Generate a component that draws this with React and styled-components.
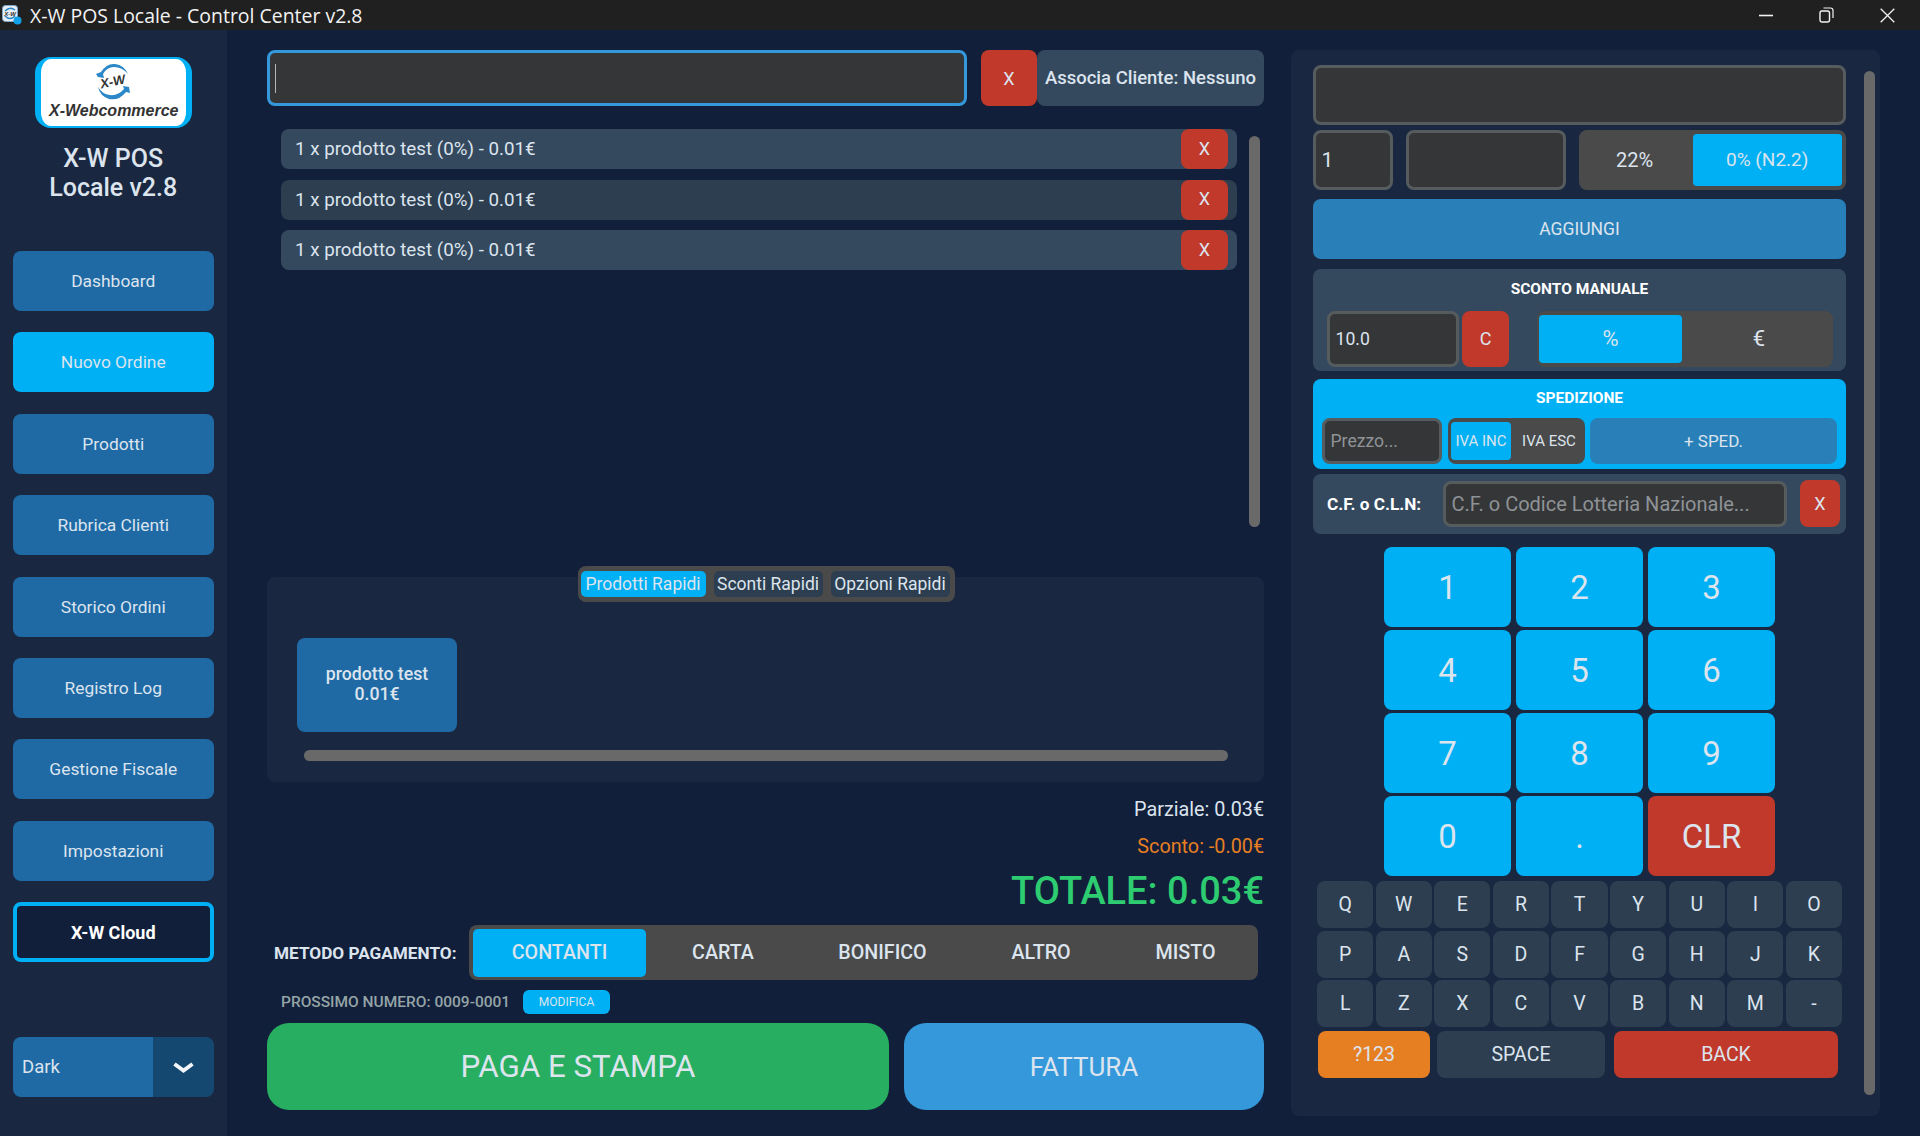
import React from 'react';
import styled, { createGlobalStyle } from 'styled-components';

const TEXT = '#dce4ee';
const CYAN = '#00b0f4';
const RED = '#c0392b';
const SLATE = '#34495e';
const SLATE_DARK = '#2c3e50';
const PANEL = '#1a2740';
const BLUE = '#1f6aa5';
const FIELD = '#343638';
const FIELD_BORDER = '#565b5e';
const SEGMENT = '#4a4a4a';

const GlobalStyle = createGlobalStyle`
  html, body {
    margin: 0;
    padding: 0;
    width: 1920px;
    height: 1136px;
    overflow: hidden;
    background: #111f3b;
    font-family: Roboto, "Liberation Sans", sans-serif;
    color: ${TEXT};
  }
  * {
    box-sizing: border-box;
  }
`;

const Window = styled.div`
  width: 1920px;
  height: 1136px;
  display: flex;
  flex-direction: column;
`;

const TitleBar = styled.header`
  height: 30px;
  flex: none;
  background: #202020;
  display: flex;
  align-items: center;
  padding-left: 2px;
  color: #f2f2f2;
  font-family: "Open Sans", "Noto Sans", sans-serif;
  font-size: 19.45px;
`;

const TitleText = styled.span`
  margin-left: 8px;
  flex: 1;
`;

const WindowButtons = styled.div`
  display: flex;
  align-items: center;
  height: 100%;
  margin-right: 2px;
`;

const WindowButton = styled.div`
  width: 61px;
  height: 100%;
  display: flex;
  align-items: center;
  justify-content: center;
`;

const Body = styled.div`
  flex: 1;
  display: flex;
  min-height: 0;
`;

const Sidebar = styled.aside`
  width: 227px;
  flex: none;
  background: ${PANEL};
  display: flex;
  flex-direction: column;
  padding: 27px 13.5px 0 13px;
`;

const Logo = styled.div`
  width: 157px;
  height: 71px;
  align-self: center;
  background: #fff;
  border-style: solid;
  border-color: ${CYAN};
  border-width: 2px 6px 2px 6px;
  border-radius: 16px;
  display: flex;
  flex-direction: column;
  align-items: center;
  padding-top: 4px;
`;

const LogoText = styled.span`
  font-family: "Liberation Sans", sans-serif;
  font-weight: 700;
  font-style: italic;
  font-size: 16px;
  line-height: 18px;
  color: #333;
  white-space: nowrap;
  margin: 1px 0 0 1px;
`;

const BrandTitle = styled.h1`
  margin: 16px 0 0;
  font-size: 25px;
  line-height: 29px;
  font-weight: 500;
  text-align: center;
`;

const Nav = styled.nav`
  display: flex;
  flex-direction: column;
  gap: 21.4px;
  margin-top: 49px;
`;

const NavButton = styled.div`
  height: 60px;
  border-radius: 8px;
  display: flex;
  align-items: center;
  justify-content: center;
  font-size: 17.4px;
  background: ${(p) => (p.$active ? CYAN : BLUE)};
  ${(p) =>
    p.$cloud &&
    `
    background: #111f3b;
    border: 4px solid ${CYAN};
    color: #fff;
    font-weight: 700;
    font-size: 18px;
  `}
`;

const ThemeSelect = styled.div`
  height: 60px;
  margin-top: 74.5px;
  border-radius: 8px;
  overflow: hidden;
  display: flex;
  font-size: 18.5px;
`;

const ThemeValue = styled.div`
  width: 140px;
  background: ${BLUE};
  display: flex;
  align-items: center;
  padding-left: 9px;
`;

const ThemeArrow = styled.div`
  flex: 1;
  background: #144870;
  display: flex;
  align-items: center;
  justify-content: center;
`;

const Main = styled.main`
  width: 997px;
  flex: none;
  margin-left: 40px;
  padding-top: 20px;
  display: flex;
  flex-direction: column;
`;

const SearchRow = styled.div`
  display: flex;
  height: 56px;
`;

const SearchBox = styled.div`
  width: 700px;
  margin-right: 14px;
  background: ${FIELD};
  border: 3px solid #3498db;
  border-radius: 8px;
  display: flex;
  align-items: center;
  padding-left: 5px;
`;

const Caret = styled.span`
  width: 1px;
  height: 29px;
  background: #b5b5b5;
`;

const RedButton = styled.div`
  background: ${RED};
  border-radius: 8px;
  display: flex;
  align-items: center;
  justify-content: center;
  flex: none;
  width: ${(p) => p.$w}px;
  font-size: ${(p) => p.$size || 18}px;
`;

const ClientButton = styled.div`
  flex: 1;
  background: ${SLATE};
  border-radius: 8px;
  display: flex;
  align-items: center;
  justify-content: center;
  font-size: 18.5px;
  font-weight: 500;
  white-space: nowrap;
`;

const CartArea = styled.section`
  display: flex;
  height: 448px;
  margin-top: 23px;
  padding-left: 14px;
`;

const CartList = styled.ul`
  width: 956px;
  margin: 0;
  padding: 0;
  list-style: none;
  display: flex;
  flex-direction: column;
  gap: 10.5px;
`;

const CartRow = styled.li`
  height: 40px;
  background: ${(p) => (p.$alt ? SLATE_DARK : SLATE)};
  border-radius: 8px;
  display: flex;
  align-items: center;
  justify-content: space-between;
  padding: 0 9px 0 14px;
  font-size: 18.75px;
`;

const RowRemove = styled(RedButton)`
  align-self: stretch;
  font-size: 18px;
  padding-bottom: 2px;
`;

const VScroll = styled.div`
  width: 11px;
  height: 391px;
  margin: 7px 0 0 12px;
  border-radius: 6px;
  background: #696969;
`;

const VScrollTall = styled(VScroll)`
  height: 1024px;
  margin: 6px 0 0 18px;
`;

const QuickPanel = styled.section`
  height: 205px;
  background: ${PANEL};
  border-radius: 8px;
  display: flex;
  flex-direction: column;
`;

const TabBar = styled.div`
  align-self: center;
  width: 377px;
  height: 36px;
  margin-top: -11px;
  margin-left: 1px;
  background: ${SEGMENT};
  border-radius: 8px;
  display: flex;
  align-items: center;
  padding-left: 3px;
  gap: 8px;
`;

const Tab = styled.div`
  height: 26px;
  width: ${(p) => p.$w}px;
  border-radius: 5px;
  background: ${(p) => (p.$active ? CYAN : SLATE_DARK)};
  display: flex;
  align-items: center;
  justify-content: center;
  font-size: 17.5px;
  white-space: nowrap;
`;

const QuickCard = styled.div`
  width: 160px;
  height: 94px;
  margin: 36px 0 0 30px;
  background: ${BLUE};
  border-radius: 8px;
  display: flex;
  flex-direction: column;
  align-items: center;
  justify-content: center;
  font-size: 17.7px;
  font-weight: 500;
  line-height: 20px;
  padding-bottom: 2px;
`;

const HScroll = styled.div`
  width: 924px;
  height: 11px;
  margin: 18px 0 0 37px;
  border-radius: 6px;
  background: #696969;
`;

const Totals = styled.div`
  margin-top: 9px;
  display: flex;
  flex-direction: column;
  align-items: flex-end;
`;

const TotalLine = styled.div`
  height: 37px;
  display: flex;
  align-items: center;
  font-size: 19.8px;
  color: ${(p) => p.$color || TEXT};
`;

const GrandTotal = styled.div`
  height: 50.5px;
  padding-top: 2px;
  display: flex;
  align-items: center;
  font-size: 38px;
  font-weight: 500;
  color: #2ecc71;
`;

const PaymentRow = styled.div`
  margin-top: 9.5px;
  height: 55px;
  display: flex;
  align-items: center;
  padding-left: 7px;
`;

const PaymentLabel = styled.span`
  width: 195px;
  font-size: 17.2px;
  font-weight: 700;
  white-space: nowrap;
`;

const PaymentSegment = styled.div`
  width: 789px;
  height: 55px;
  background: ${SEGMENT};
  border-radius: 8px;
  display: flex;
  align-items: center;
  padding: 0 4px;
`;

const PaymentOption = styled.div`
  height: 48px;
  width: ${(p) => p.$w}px;
  border-radius: 5px;
  background: ${(p) => (p.$active ? CYAN : 'transparent')};
  display: flex;
  align-items: center;
  justify-content: center;
  font-size: 19.7px;
  font-weight: 500;
`;

const NumberRow = styled.div`
  margin-top: 10px;
  height: 24px;
  display: flex;
  align-items: center;
  padding-left: 14px;
`;

const NumberLabel = styled.span`
  width: 242px;
  color: #95a5a6;
  font-size: 15.5px;
  font-weight: 500;
  white-space: nowrap;
`;

const EditButton = styled.div`
  width: 87px;
  height: 24px;
  background: ${CYAN};
  border-radius: 6px;
  display: flex;
  align-items: center;
  justify-content: center;
  font-size: 12px;
`;

const PayRow = styled.div`
  margin-top: 9px;
  height: 87px;
  display: flex;
  gap: 15px;
`;

const PayButton = styled.div`
  width: ${(p) => p.$w}px;
  border-radius: 22px;
  background: ${(p) => p.$bg};
  display: flex;
  align-items: center;
  justify-content: center;
  font-size: ${(p) => p.$size}px;
`;

const RightPanel = styled.section`
  width: 589px;
  height: 1066px;
  flex: none;
  margin: 20px 0 0 27px;
  padding: 15px 0 0 22px;
  background: ${PANEL};
  border-radius: 8px;
  display: flex;
`;

const RightContent = styled.div`
  width: 533px;
  flex: none;
  display: flex;
  flex-direction: column;
`;

const Field = styled.input`
  display: block;
  min-width: 0;
  background: ${FIELD};
  border: 3px solid ${FIELD_BORDER};
  border-radius: 8px;
  color: ${TEXT};
  font-family: Roboto, sans-serif;
  font-size: ${(p) => p.$size || 17.6}px;
  padding: 0 5.5px;
  outline: none;
  width: ${(p) => (p.$w ? `${p.$w}px` : '100%')};
  height: ${(p) => p.$h || 60}px;
  flex: none;
  margin-left: ${(p) => p.$ml || 0}px;

  &::placeholder {
    color: #8f9396;
    opacity: 1;
  }
`;

const ProductRow = styled.div`
  display: flex;
  margin-top: 5px;
  height: 60px;
`;

const Segment = styled.div`
  background: ${SEGMENT};
  border-radius: 8px;
  display: flex;
  align-items: center;
  justify-content: space-between;
  flex: none;
  width: ${(p) => p.$w}px;
  height: ${(p) => p.$h}px;
  margin-left: ${(p) => p.$ml || 0}px;
  padding: 0 ${(p) => p.$pad || 4}px;
`;

const SegmentOption = styled.div`
  height: ${(p) => p.$h}px;
  width: ${(p) => p.$w}px;
  flex: none;
  border-radius: 4px;
  background: ${(p) => (p.$active ? CYAN : 'transparent')};
  display: flex;
  align-items: center;
  justify-content: center;
  font-size: ${(p) => p.$size || 19}px;
  white-space: nowrap;
  padding-bottom: 1px;
`;

const IvaOption = styled(SegmentOption)`
  font-size: 15px;
  padding-bottom: 0;
`;

const AddButton = styled.div`
  height: 60px;
  margin-top: 9px;
  background: #2980b9;
  border-radius: 8px;
  display: flex;
  align-items: center;
  justify-content: center;
  font-size: 17.5px;
`;

const SubPanel = styled.div`
  margin-top: ${(p) => p.$mt}px;
  height: ${(p) => p.$h}px;
  background: ${(p) => p.$bg || SLATE};
  border-radius: 8px;
  padding: 0 ${(p) => p.$pad || 14}px;
`;

const SubTitle = styled.div`
  text-align: center;
  font-weight: 700;
  font-size: 15.5px;
  color: #fff;
  line-height: 18px;
  padding-top: ${(p) => p.$top}px;
`;

const InlineRow = styled.div`
  display: flex;
  align-items: center;
  margin-top: ${(p) => p.$mt || 0}px;
`;

const StretchRed = styled(RedButton)`
  height: ${(p) => p.$h}px;
  margin-left: ${(p) => p.$ml || 0}px;
`;

const ShipAdd = styled.div`
  width: 247px;
  height: 46px;
  margin-left: 5px;
  background: #2980b9;
  border-radius: 8px;
  display: flex;
  align-items: center;
  justify-content: center;
  font-size: 17px;
`;

const CfPanel = styled(SubPanel)`
  display: flex;
  align-items: center;
`;

const CfLabel = styled.span`
  width: 116px;
  flex: none;
  font-size: 17.2px;
  font-weight: 700;
  color: #fff;
  white-space: nowrap;
`;

const NumPad = styled.div`
  margin: 13px 0 0 71px;
  display: grid;
  grid-template-columns: repeat(3, 127px);
  grid-auto-rows: 80.5px;
  column-gap: 5px;
  row-gap: 2.5px;
`;

const NumKey = styled.div`
  background: ${(p) => (p.$red ? RED : CYAN)};
  border-radius: 8px;
  display: flex;
  align-items: center;
  justify-content: center;
  font-size: 33px;
  padding-top: 1px;
`;

const Keyboard = styled.div`
  margin: 5px 0 0 4px;
  display: grid;
  grid-template-columns: repeat(9, 56.3px);
  grid-auto-rows: 47px;
  column-gap: 2.3px;
  row-gap: 2.5px;
`;

const Key = styled.div`
  background: ${SLATE_DARK};
  border-radius: 8px;
  display: flex;
  align-items: center;
  justify-content: center;
  font-size: 19.5px;
`;

const KeyboardBottom = styled.div`
  margin: 3.5px 0 0 5px;
  height: 47px;
  display: flex;
`;

const BottomKey = styled(Key)`
  width: ${(p) => p.$w}px;
  margin-left: ${(p) => p.$ml || 0}px;
  background: ${(p) => p.$bg || SLATE_DARK};
`;

const AppIcon = () => (
  <svg width="20" height="20" viewBox="0 0 20 20">
    <rect x="0.5" y="0.5" width="15" height="16" rx="3" fill="#e8eef6" stroke="#7fa8cc" />
    <path d="M3 6 Q8 1 13 5" fill="none" stroke="#2a87c8" strokeWidth="1.6" />
    <path d="M3 11 Q8 16 13 11" fill="none" stroke="#2a87c8" strokeWidth="1.6" />
    <text x="8" y="10.5" fontSize="6" fontWeight="700" fontStyle="italic" textAnchor="middle" fill="#333" fontFamily="Liberation Sans">X-W</text>
    <circle cx="15.5" cy="15.5" r="4" fill="#12a0e8" />
  </svg>
);

const LogoMark = () => (
  <svg width="36" height="38" viewBox="0 0 36 38">
    <path d="M3 14 L1 11 L6 9 Q12 0 20 1 Q29 2 33 11 Q27 4 19 4 Q12 4 8 11 L9 15 Z" fill="#2a87c8" />
    <path d="M3 24 Q5 33 14 36 Q24 38 31 29 L35 30 L34 24 L28 23 L29 26 Q23 33 15 32 Q7 31 3 24 Z" fill="#2a87c8" />
    <text x="18" y="23" fontSize="13" fontWeight="700" fontStyle="italic" textAnchor="middle" fill="#333" fontFamily="Liberation Sans" transform="rotate(-12 18 20)">X-W</text>
  </svg>
);

const Chevron = () => (
  <svg width="21" height="12" viewBox="0 0 21 12">
    <path d="M1.5 3 L10.5 9.5 L19.5 3" fill="none" stroke="#f2f5f9" strokeWidth="4" />
  </svg>
);

const MinimizeIcon = () => (
  <svg width="14" height="14" viewBox="0 0 14 14">
    <path d="M0 7.5 H14" stroke="#f2f2f2" strokeWidth="1.6" />
  </svg>
);

const RestoreIcon = () => (
  <svg width="15" height="16" viewBox="0 0 15 16">
    <rect x="1" y="4" width="9.5" height="11" rx="2" fill="none" stroke="#f2f2f2" strokeWidth="1.4" />
    <path d="M4.5 1 H11.5 Q14 1 14 3.5 V11" fill="none" stroke="#f2f2f2" strokeWidth="1.2" />
  </svg>
);

const CloseIcon = () => (
  <svg width="15" height="15" viewBox="0 0 15 15">
    <path d="M0.7 0.7 L14.3 14.3 M14.3 0.7 L0.7 14.3" stroke="#f2f2f2" strokeWidth="1.3" />
  </svg>
);

const NAV_ITEMS = [
  'Dashboard',
  'Nuovo Ordine',
  'Prodotti',
  'Rubrica Clienti',
  'Storico Ordini',
  'Registro Log',
  'Gestione Fiscale',
  'Impostazioni',
];

const PAYMENTS = [
  { label: 'CONTANTI', w: 173, active: true },
  { label: 'CARTA', w: 154 },
  { label: 'BONIFICO', w: 165 },
  { label: 'ALTRO', w: 152 },
  { label: 'MISTO', w: 137 },
];

const KEYS = 'QWERTYUIOPASDFGHJKLZXCVBNM-'.split('');
const NUMS = ['1', '2', '3', '4', '5', '6', '7', '8', '9', '0', '.'];

const App = () => {
  return (
    <Window>
      <GlobalStyle />
      <TitleBar>
        <AppIcon />
        <TitleText>X-W POS Locale - Control Center v2.8</TitleText>
        <WindowButtons>
          <WindowButton><MinimizeIcon /></WindowButton>
          <WindowButton><RestoreIcon /></WindowButton>
          <WindowButton><CloseIcon /></WindowButton>
        </WindowButtons>
      </TitleBar>
      <Body>
        <Sidebar>
          <Logo>
            <LogoMark />
            <LogoText>X-Webcommerce</LogoText>
          </Logo>
          <BrandTitle>
            X-W POS
            <br />
            Locale v2.8
          </BrandTitle>
          <Nav>
            {NAV_ITEMS.map((item) => (
              <NavButton key={item} $active={item === 'Nuovo Ordine'}>
                {item}
              </NavButton>
            ))}
            <NavButton $cloud>X-W Cloud</NavButton>
          </Nav>
          <ThemeSelect>
            <ThemeValue>Dark</ThemeValue>
            <ThemeArrow><Chevron /></ThemeArrow>
          </ThemeSelect>
        </Sidebar>

        <Main>
          <SearchRow>
            <SearchBox><Caret /></SearchBox>
            <RedButton $w={56}>X</RedButton>
            <ClientButton>Associa Cliente: Nessuno</ClientButton>
          </SearchRow>

          <CartArea>
            <CartList>
              {[0, 1, 2].map((i) => (
                <CartRow key={i} $alt={i === 1}>
                  <span>1 x prodotto test (0%) - 0.01€</span>
                  <RowRemove $w={47}>X</RowRemove>
                </CartRow>
              ))}
            </CartList>
            <VScroll />
          </CartArea>

          <QuickPanel>
            <TabBar>
              <Tab $active $w={125}>Prodotti Rapidi</Tab>
              <Tab $w={109}>Sconti Rapidi</Tab>
              <Tab $w={119}>Opzioni Rapidi</Tab>
            </TabBar>
            <QuickCard>
              <span>prodotto test</span>
              <span>0.01€</span>
            </QuickCard>
            <HScroll />
          </QuickPanel>

          <Totals>
            <TotalLine>Parziale: 0.03€</TotalLine>
            <TotalLine $color="#e67e22">Sconto: -0.00€</TotalLine>
            <GrandTotal>TOTALE: 0.03€</GrandTotal>
          </Totals>

          <PaymentRow>
            <PaymentLabel>METODO PAGAMENTO:</PaymentLabel>
            <PaymentSegment>
              {PAYMENTS.map((p) => (
                <PaymentOption key={p.label} $w={p.w} $active={p.active}>
                  {p.label}
                </PaymentOption>
              ))}
            </PaymentSegment>
          </PaymentRow>

          <NumberRow>
            <NumberLabel>PROSSIMO NUMERO: 0009-0001</NumberLabel>
            <EditButton>MODIFICA</EditButton>
          </NumberRow>

          <PayRow>
            <PayButton $w={622} $bg="#27ae60" $size={31.3}>PAGA E STAMPA</PayButton>
            <PayButton $w={360} $bg="#3498db" $size={26}>FATTURA</PayButton>
          </PayRow>
        </Main>

        <RightPanel>
          <RightContent>
            <Field />
            <ProductRow>
              <Field $w={80} defaultValue="1" $size={21} />
              <Field $w={160} $ml={13} />
              <Segment $w={267} $h={60} $ml={13} $pad={4}>
                <SegmentOption $w={103} $h={52} $size={20}>22%</SegmentOption>
                <SegmentOption $w={149.5} $h={52} $active>0% (N2.2)</SegmentOption>
              </Segment>
            </ProductRow>
            <AddButton>AGGIUNGI</AddButton>

            <SubPanel $mt={9.5} $h={102}>
              <SubTitle $top={11}>SCONTO MANUALE</SubTitle>
              <InlineRow $mt={13}>
                <Field $w={132} $h={56} defaultValue="10.0" />
                <StretchRed $w={47} $h={56} $ml={3}>C</StretchRed>
                <Segment $w={296} $h={56} $ml={28} $pad={2}>
                  <SegmentOption $w={143} $h={48} $active $size={22}>%</SegmentOption>
                  <SegmentOption $w={154} $h={48} $size={22}>€</SegmentOption>
                </Segment>
              </InlineRow>
            </SubPanel>

            <SubPanel $mt={8} $h={90} $bg={CYAN} $pad={9}>
              <SubTitle $top={10}>SPEDIZIONE</SubTitle>
              <InlineRow $mt={11}>
                <Field $w={120} $h={46} placeholder="Prezzo..." />
                <Segment $w={137} $h={46} $ml={6} $pad={3}>
                  <IvaOption $w={60} $h={38} $active>IVA INC</IvaOption>
                  <IvaOption $w={76} $h={38}>IVA ESC</IvaOption>
                </Segment>
                <ShipAdd>+ SPED.</ShipAdd>
              </InlineRow>
            </SubPanel>

            <CfPanel $mt={5} $h={60}>
              <CfLabel>C.F. o C.L.N:</CfLabel>
              <Field $w={344} $h={46} $size={20} placeholder="C.F. o Codice Lotteria Nazionale..." />
              <StretchRed $w={40} $h={47} $ml={13}>X</StretchRed>
            </CfPanel>

            <NumPad>
              {NUMS.map((n) => (
                <NumKey key={n}>{n}</NumKey>
              ))}
              <NumKey $red>CLR</NumKey>
            </NumPad>

            <Keyboard>
              {KEYS.map((k) => (
                <Key key={k}>{k}</Key>
              ))}
            </Keyboard>
            <KeyboardBottom>
              <BottomKey $w={112} $bg="#e67e22">?123</BottomKey>
              <BottomKey $w={168} $ml={7}>SPACE</BottomKey>
              <BottomKey $w={224} $ml={9} $bg={RED}>BACK</BottomKey>
            </KeyboardBottom>
          </RightContent>
          <VScrollTall />
        </RightPanel>
      </Body>
    </Window>
  );
};

export default App;
